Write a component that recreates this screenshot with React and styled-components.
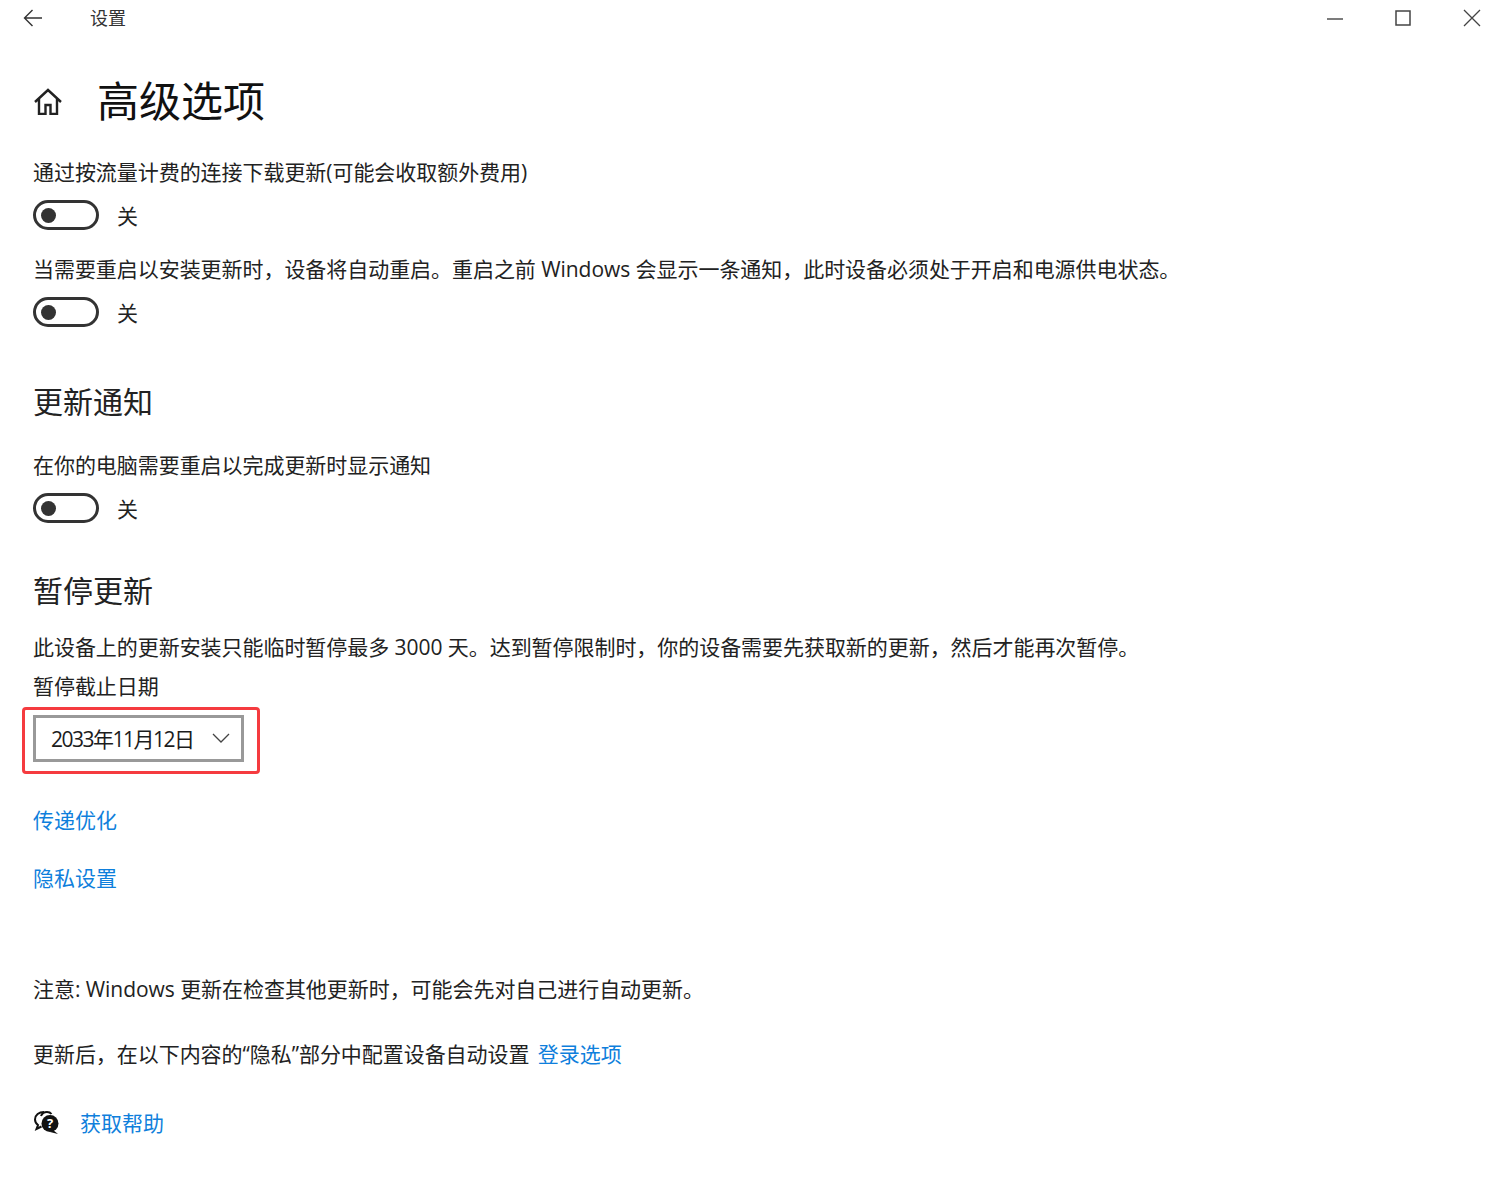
import React from 'react';
import styled, { createGlobalStyle } from 'styled-components';

const GlobalStyle = createGlobalStyle`
  html, body {
    margin: 0;
    padding: 0;
    background: #fff;
  }
  body {
    font-family: "Open Sans", "Noto Sans CJK SC", sans-serif;
    color: #1c1c1c;
  }
`;

// TITLE BAR //
const TitleBar = styled.header`
  display: flex;
  align-items: center;
  height: 36px;
  padding-left: 23px;
`;

const BackButton = styled.span`
  display: flex;
  width: 67px;
`;

const WindowTitle = styled.span`
  font-size: 18px;
  line-height: 36px;
  color: #333;
`;

const WindowControls = styled.div`
  display: flex;
  align-items: center;
  gap: 52px;
  margin-left: auto;
  padding-right: 22px;
`;

// MAIN //
const Main = styled.main`
  display: flex;
  flex-direction: column;
  align-items: flex-start;
  padding-left: 33px;
`;

const PageHeading = styled.div`
  display: flex;
  align-items: center;
  height: 62px;
  margin-top: 34px;
`;

const HomeIcon = styled.span`
  display: flex;
  width: 64px;
`;

const PageTitle = styled.h1`
  margin: 0;
  font-size: 42px;
  font-weight: 400;
  line-height: 62px;
  color: #111;
`;

const SectionTitle = styled.h2`
  margin: ${(p) => p.$top}px 0 0;
  font-size: 30px;
  font-weight: 400;
  line-height: 40px;
  color: #222;
`;

const Text = styled.p`
  margin: ${(p) => p.$top}px 0 0;
  font-size: 21px;
  line-height: 30px;
  letter-spacing: -0.05px;
  color: #222;
  white-space: nowrap;
`;

const Link = styled.a`
  color: #0f7fdc;
  text-decoration: none;
`;

const InlineLink = styled(Link)`
  margin-left: 3px;
  letter-spacing: 0;
`;

const BlockLink = styled(Link)`
  display: block;
  margin-top: ${(p) => p.$top}px;
  font-size: 21px;
  line-height: 30px;
`;

const ToggleRow = styled.div`
  display: flex;
  align-items: center;
  height: 30px;
  margin-top: ${(p) => p.$top}px;
`;

const Track = styled.span`
  display: flex;
  align-items: center;
  box-sizing: border-box;
  width: 66px;
  height: 30px;
  padding-left: 5px;
  border: 3px solid #333;
  border-radius: 15px;
`;

const Knob = styled.span`
  width: 15px;
  height: 15px;
  border-radius: 50%;
  background: #333;
`;

const ToggleLabel = styled.span`
  margin-left: 18px;
  padding-top: 2px;
  font-size: 21px;
  line-height: 30px;
  color: #222;
`;

const Highlight = styled.div`
  box-sizing: border-box;
  width: 238px;
  height: 67px;
  margin: 6px 0 0 -11px;
  padding: 5px 0 0 8px;
  border: 3px solid #f53b3f;
  border-radius: 4px;
`;

const Select = styled.div`
  display: flex;
  align-items: center;
  justify-content: space-between;
  box-sizing: border-box;
  width: 211px;
  height: 47px;
  padding: 0 11px 2px 15px;
  border: 3px solid #999;
  font-size: 21px;
  letter-spacing: -1.5px;
  white-space: nowrap;
  color: #1c1c1c;
`;

const HelpRow = styled.div`
  display: flex;
  align-items: center;
  height: 30px;
  margin-top: 39px;
`;

const HelpIcon = styled.span`
  display: flex;
  width: 47px;
`;

const Toggle = ({ top }) => (
  <ToggleRow $top={top}>
    <Track>
      <Knob />
    </Track>
    <ToggleLabel>关</ToggleLabel>
  </ToggleRow>
);

export default function App() {
  return (
    <>
      <GlobalStyle />
      <TitleBar>
        <BackButton>
          <svg width="20" height="18" viewBox="0 0 20 18" fill="none" stroke="#333" strokeWidth="1.4">
            <path d="M19 9H1.5M9.5 1 1.5 9l8 8" />
          </svg>
        </BackButton>
        <WindowTitle>设置</WindowTitle>
        <WindowControls>
          <svg width="16" height="16" viewBox="0 0 16 16" fill="none" stroke="#444" strokeWidth="1.4">
            <path d="M0 9h16" />
          </svg>
          <svg width="16" height="16" viewBox="0 0 16 16" fill="none" stroke="#444" strokeWidth="1.5">
            <rect x="1" y="1" width="14" height="14" />
          </svg>
          <svg width="18" height="18" viewBox="0 0 18 18" fill="none" stroke="#444" strokeWidth="1.3">
            <path d="M1 1l16 16M17 1 1 17" />
          </svg>
        </WindowControls>
      </TitleBar>

      <Main>
        <PageHeading>
          <HomeIcon>
            <svg width="30" height="28" viewBox="0 0 30 28" fill="none" stroke="#222" strokeWidth="2.4">
              <path d="M2 15 15 3l13 12M6 11.500V27h6.500v-9h5v9H24V11.500" />
            </svg>
          </HomeIcon>
          <PageTitle>高级选项</PageTitle>
        </PageHeading>

        <Text $top={25}>通过按流量计费的连接下载更新(可能会收取额外费用)</Text>
        <Toggle top={13} />
        <Text $top={24}>当需要重启以安装更新时，设备将自动重启。重启之前 Windows 会显示一条通知，此时设备必须处于开启和电源供电状态。</Text>
        <Toggle top={13} />

        <SectionTitle $top={55}>更新通知</SectionTitle>
        <Text $top={28}>在你的电脑需要重启以完成更新时显示通知</Text>
        <Toggle top={13} />

        <SectionTitle $top={48}>暂停更新</SectionTitle>
        <Text $top={21}>此设备上的更新安装只能临时暂停最多 3000 天。达到暂停限制时，你的设备需要先获取新的更新，然后才能再次暂停。</Text>
        <Text $top={9}>暂停截止日期</Text>
        <Highlight>
          <Select>
            2033年11月12日
            <svg width="18" height="14" viewBox="0 0 18 14" fill="none" stroke="#444" strokeWidth="1.3">
              <path d="M1 3l8 8 8-8" />
            </svg>
          </Select>
        </Highlight>

        <BlockLink $top={31}>传递优化</BlockLink>
        <BlockLink $top={28}>隐私设置</BlockLink>

        <Text $top={81}>注意: Windows 更新在检查其他更新时，可能会先对自己进行自动更新。</Text>
        <Text $top={35}>
          更新后，在以下内容的“隐私”部分中配置设备自动设置 <InlineLink>登录选项</InlineLink>
        </Text>

        <HelpRow>
          <HelpIcon>
            <svg width="28" height="26" viewBox="0 0 28 26">
              <path d="M11 2C6 2 2 5 2 9.500c0 2.500 1.200 4.200 3 5.500l-1.500 4 5-2.500" fill="none" stroke="#111" strokeWidth="2" />
              <path d="M8 6c1-2.500 3-4 6-4 2 0 3.500.7 4.500 2" fill="none" stroke="#111" strokeWidth="2" />
              <circle cx="17" cy="13.500" r="8.500" fill="#111" />
              <path d="M20 20l5 4-8-2z" fill="#111" />
              <text x="17" y="18" textAnchor="middle" fontSize="13" fontWeight="700" fill="#fff" fontFamily="Open Sans, sans-serif">?</text>
            </svg>
          </HelpIcon>
          <BlockLink $top={0}>获取帮助</BlockLink>
        </HelpRow>
      </Main>
    </>
  );
}
